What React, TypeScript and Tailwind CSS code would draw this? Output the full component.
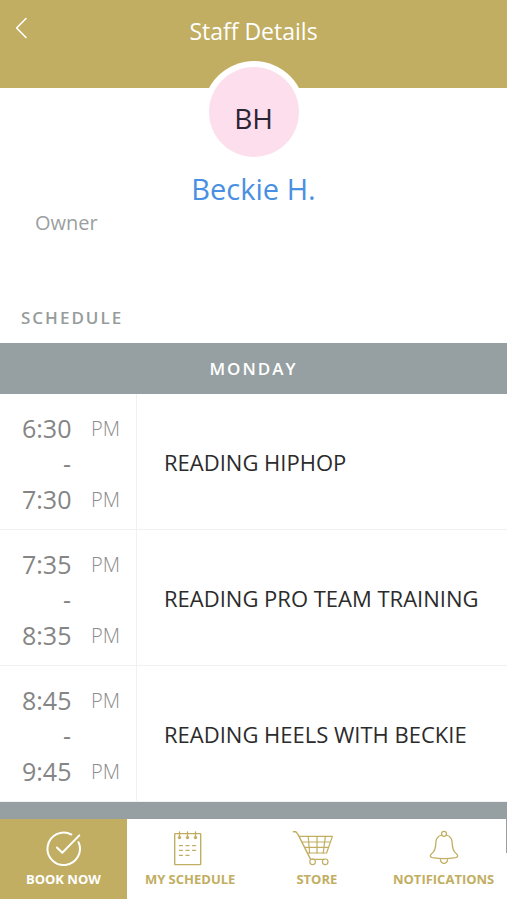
import React from "react";

type Session = { start: string; end: string; title: string };

const sessions: Session[] = [
  { start: "6:30", end: "7:30", title: "READING HIPHOP" },
  { start: "7:35", end: "8:35", title: "READING PRO TEAM TRAINING" },
  { start: "8:45", end: "9:45", title: "READING HEELS WITH BECKIE" },
];

function BookIcon() {
  return (
    <svg width="36" height="36" viewBox="-0.5 0 36 36" fill="none" stroke="currentColor" strokeWidth="2" strokeLinecap="round" strokeLinejoin="round" aria-hidden="true">
      <path d="M25.8 4.5A16.2 16.2 0 1 0 33 12.200" />
      <path d="M11.400 17.500l5.400 5.300L33.800 5.400" />
    </svg>
  );
}

function ScheduleIcon() {
  return (
    <svg width="36" height="36" viewBox="-1.5 0 36 36" fill="none" stroke="currentColor" strokeWidth="1.4" aria-hidden="true">
      <rect x="1.2" y="3.6" width="26" height="31" rx="0.6" />
      <path d="M6 2v5M14 2v5M22 2v5" strokeLinecap="round" />
      <g fill="currentColor" stroke="none">
        <circle cx="6" cy="7.600" r="1.700" />
        <circle cx="14" cy="7.600" r="1.700" />
        <circle cx="22" cy="7.600" r="1.700" />
      </g>
      <path d="M5.400 15.600h4M12 15.600h4M18.600 15.600h4M5.400 20.400h4M12 20.400h4M18.600 20.400h4M5.400 25.400h4M12 25.400h4" />
    </svg>
  );
}

function CartIcon() {
  return (
    <svg width="50" height="36" viewBox="0 0 50 36" fill="none" stroke="currentColor" strokeWidth="1.2" strokeLinecap="round" strokeLinejoin="round" aria-hidden="true">
      <path d="M1.400 1.800H3.800L6 4.400L18.600 29.400H32" strokeWidth="1.400" />
      <path d="M7.400 6.400H40.400L34.600 23H15.800" />
      <path d="M10.400 12H38.400M13.200 17.400H36.400M16.200 6.400L17.600 23M25 6.400V23M33.400 6.400L31.200 23" />
      <circle cx="20.600" cy="31.800" r="2.800" />
      <circle cx="33.200" cy="31.800" r="2.800" />
    </svg>
  );
}

function BellIcon() {
  return (
    <svg width="30" height="36" viewBox="0 0 30 36" fill="none" stroke="currentColor" strokeWidth="1.3" strokeLinecap="round" strokeLinejoin="round" aria-hidden="true">
      <circle cx="15" cy="3.8" r="2.500" />
      <path d="M12.700 5C8.600 6.200 6.800 9.400 6.800 13C6.800 19 5.600 21.600 2.400 24C.6 25.600 1 27 3.400 27.600C10 28.800 20 28.800 26.600 27.600C29 27 29.400 25.600 27.600 24C24.400 21.600 23.200 19 23.200 13C23.200 9.400 21.400 6.200 17.300 5" />
      <path d="M11.400 28.600a3.600 3.800 0 1 0 7.200 0" transform="translate(0 1)" />
    </svg>
  );
}

const tabs = [
  { label: "BOOK NOW", icon: <BookIcon />, active: true },
  { label: "MY SCHEDULE", icon: <ScheduleIcon />, active: false },
  { label: "STORE", icon: <CartIcon />, active: false },
  { label: "NOTIFICATIONS", icon: <BellIcon />, active: false },
];

function Time({ value }: { value: string }) {
  return (
    <div className="flex h-9 items-center">
      <span className="w-[49px] text-right text-[25px] leading-9 text-[#858585]">{value}</span>
      <span className="ml-5 pt-0.5 text-xl leading-9 font-light text-[#8c8c8c]">PM</span>
    </div>
  );
}

function SessionRow({ session }: { session: Session }) {
  return (
    <li className="flex border-b border-[#f0f2f2]">
      <div className="w-[137px] shrink-0 border-r border-[#f0f2f2] pt-4 pb-3 pl-[22px]">
        <Time value={session.start} />
        <div className="h-[35px] w-[49px] text-right text-[25px] leading-[35px] text-[#858585]">-</div>
        <Time value={session.end} />
      </div>
      <div className="flex flex-1 items-center pl-[27px]">
        <h3 className="text-[22px] leading-8 whitespace-nowrap text-[#2b2b2b]">{session.title}</h3>
      </div>
    </li>
  );
}

export default function App() {
  return (
    <div className="flex h-screen flex-col overflow-hidden bg-white pb-px font-['Open_Sans','Noto_Sans',sans-serif]">
      <header className="grid h-[88px] shrink-0 grid-cols-[48px_1fr_48px] items-start bg-[#c1ae62] pt-2.5 text-white">
        <button type="button" aria-label="Back" className="flex h-9 items-center pl-[15px]">
          <svg width="13" height="22" viewBox="0 0 13 22" fill="none" stroke="currentColor" strokeWidth="1.6" strokeLinecap="round" strokeLinejoin="round" aria-hidden="true">
            <path d="M11 1.500L1.600 11L11 20.500" />
          </svg>
        </button>
        <h1 className="pt-[3px] text-center text-[23px] leading-9">Staff Details</h1>
      </header>

      <section className="relative -mt-[27px] flex shrink-0 flex-col items-center">
        <div className="flex size-[102px] items-center justify-center rounded-full bg-white">
          <div className="flex size-[90px] items-center justify-center rounded-full bg-[#fddeed] pt-3 text-[28px] leading-9 text-[#2b2433]">
            BH
          </div>
        </div>
        <h2 className="mt-1.5 text-[29px] leading-10 text-[#4a90e2]">Beckie H.</h2>
        <p className="self-start pl-[35px] text-[20px] leading-7 text-[#9b9f9f]">Owner</p>
      </section>

      <main className="mt-[67px] min-h-0 flex-1 overflow-hidden">
        <h2 className="pl-[21px] text-[17px] leading-7 font-semibold tracking-[2px] text-[#969c9c]">SCHEDULE</h2>
        <h3 className="mt-[11px] flex h-[51px] items-center justify-center bg-[#969fa1] text-[17px] font-semibold tracking-[2px] text-white">
          MONDAY
        </h3>
        <ul>
          {sessions.map((session) => (
            <SessionRow key={session.start} session={session} />
          ))}
        </ul>
        <div className="h-[51px] bg-[#969fa1] pt-2 pl-[22px] text-[25px] leading-9 text-[#6f7577]">8:45</div>
      </main>

      <nav className="relative grid h-20 shrink-0 grid-cols-4 bg-white">
        {tabs.map((tab) => (
          <button
            key={tab.label}
            type="button"
            className={
              tab.active
                ? "flex flex-col items-center bg-[#c1ae62] pt-[11px] text-white"
                : "flex flex-col items-center pt-[11px] text-[#c1ae62]"
            }
          >
            {tab.icon}
            <span className="mt-1 text-[13px] leading-[18px] font-bold whitespace-nowrap">{tab.label}</span>
          </button>
        ))}
        <span className="absolute top-0 right-0 h-[34px] w-px bg-[#969fa1]" />
      </nav>
    </div>
  );
}
